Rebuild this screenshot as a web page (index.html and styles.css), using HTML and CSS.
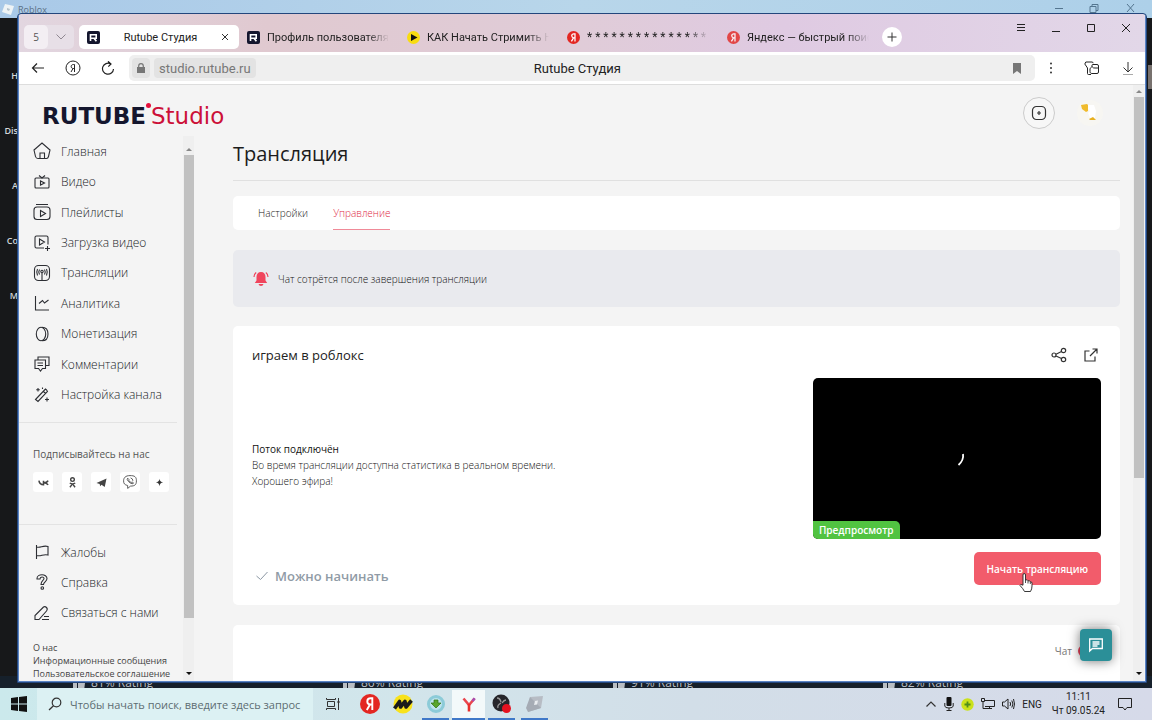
FILE: index.html
```html
<!DOCTYPE html>
<html lang="ru">
<head>
<meta charset="utf-8">
<title>Rutube Студия</title>
<link rel="stylesheet" href="styles.css">
</head>
<body>
<svg class="defs" aria-hidden="true">
  <symbol id="thumb" viewBox="0 0 12 12"><path d="M0 4h4v8H0zM5 4l3-4h2l-1 4h3l-1 8H5z" fill="currentColor"/></symbol>
  <symbol id="rlogo" viewBox="0 0 13 13"><rect width="13" height="13" rx="2" fill="#14162e"/><path d="M3.500 10V3.700h5.700v3.500H4M7 7.200l2.400 3" fill="none" stroke="#fff" stroke-width="1.600"/></symbol>
  <symbol id="ya" viewBox="0 0 20 20"><circle cx="10" cy="10" r="10" fill="currentColor"/><path d="M12.300 16V4.300h-1.600C8.500 4.300 7.300 5.600 7.300 7.400c0 2 1 2.900 3 3.100h2M10 10.500L6.800 16" fill="none" stroke="#fff" stroke-width="1.900"/></symbol>
</svg>

<div class="desktop">
  <section class="roblox">
    <header class="roblox-bar">
      <svg width="12" height="12" viewBox="0 0 12 12"><path d="M3 1l9 2-3 9-9-3z" fill="#eef3f5"/><path d="M5 5l3 1-1 2-2-1z" fill="#b4c2cc"/></svg>
      <span class="roblox-name">Roblox</span>
      <svg width="96" height="12" viewBox="0 0 96 12" fill="none" stroke="#54758f"><path d="M11 5.500h8M46 3.500h6v6h-6zM48 3V1.500h6v6h-2M83 1l7 8M90 1l-7 8"/></svg>
    </header>
    <div class="roblox-body">
      <nav class="roblox-nav"><span>H</span><span>Dis</span><span>A</span><span>Co</span><span>M</span></nav>
      <span class="roblox-scroll"></span>
    </div>
    <div class="ratings">
      <span><svg width="12" height="12"><use href="#thumb"/></svg>81% Rating</span>
      <span><svg width="12" height="12"><use href="#thumb"/></svg>86% Rating</span>
      <span><svg width="12" height="12"><use href="#thumb"/></svg>91% Rating</span>
      <span><svg width="12" height="12"><use href="#thumb"/></svg>82% Rating</span>
    </div>
  </section>

  <section class="browser">
    <header class="tabstrip">
      <div class="tab-group">
        <button class="tab-count">5</button>
        <button class="tab-drop" aria-label="Список вкладок"><svg width="10" height="6" viewBox="0 0 10 6"><path d="M.5.5L5 5 9.500.5" fill="none" stroke="#8f8791"/></svg></button>
      </div>
      <div class="tabs">
        <div class="tab active"><svg width="13" height="13"><use href="#rlogo"/></svg><span class="tab-name">Rutube Студия</span><button class="tab-close" aria-label="Закрыть"><svg width="8" height="8" viewBox="0 0 8 8"><path d="M1 1l6 6M7 1L1 7" stroke="#333"/></svg></button></div>
        <div class="tab"><svg width="13" height="13"><use href="#rlogo"/></svg><span class="tab-name">Профиль пользователя R</span></div>
        <div class="tab"><svg width="13" height="13" viewBox="0 0 13 13"><circle cx="6.500" cy="6.500" r="6.500" fill="#f8dc10"/><path d="M4 3l6.500 3.500L4 10z" fill="#111"/></svg><span class="tab-name">КАК Начать Стримить НА</span></div>
        <div class="tab"><svg class="red" width="13" height="13"><use href="#ya"/></svg><span class="tab-name stars">* * * * * * * * * * * * * * * * * *</span></div>
        <div class="tab"><svg class="red pale" width="13" height="13"><use href="#ya"/></svg><span class="tab-name">Яндекс — быстрый поиск</span></div>
      </div>
      <button class="new-tab" aria-label="Новая вкладка"><svg width="10" height="10" viewBox="0 0 10 10"><path d="M5 .5v9M.5 5h9" stroke="#333"/></svg></button>
      <div class="win-controls">
        <button aria-label="Меню"><svg width="10" height="10" viewBox="0 0 10 10"><path d="M1 1.500h8M1 4.500h8M1 7.500h8" stroke="#222"/></svg></button>
        <button aria-label="Свернуть"><svg width="10" height="10" viewBox="0 0 10 10"><path d="M1 8.500h8" stroke="#222"/></svg></button>
        <button aria-label="Развернуть"><svg width="10" height="10" viewBox="0 0 10 10"><path d="M1.500 1.500h7v7h-7z" fill="none" stroke="#222"/></svg></button>
        <button aria-label="Закрыть окно"><svg width="10" height="10" viewBox="0 0 10 10"><path d="M1 1l8 8M9 1L1 9" stroke="#222"/></svg></button>
      </div>
    </header>

    <div class="toolbar">
      <button class="tool" aria-label="Назад"><svg width="14" height="14" viewBox="0 0 14 14"><path d="M13 7H2M6 2.500L1.500 7 6 11.500" fill="none" stroke="#222" stroke-width="1.200"/></svg></button>
      <button class="tool" aria-label="Яндекс"><svg width="16" height="16" viewBox="0 0 16 16" fill="none" stroke="#222"><circle cx="8" cy="8" r="7"/><path d="M9.500 12V4.500h-1c-1.500 0-2.300.8-2.300 2s.8 2 2 2h1.300M8 8.500L6 12"/></svg></button>
      <button class="tool" aria-label="Обновить"><svg width="14" height="14" viewBox="0 0 14 14"><path d="M12.500 8A5.500 5.500 0 1 1 9.500 2.800M7 .3l3 2.700-2.700 2.700" fill="none" stroke="#222" stroke-width="1.200"/></svg></button>
      <div class="address">
        <button class="lock" aria-label="Соединение"><svg width="8" height="10" viewBox="0 0 8 10"><path d="M0 4h8v6H0z" fill="#777"/><path d="M1.700 4V3a2.300 2.300 0 0 1 4.600 0v1" fill="none" stroke="#777" stroke-width="1.200"/></svg></button>
        <button class="host">studio.rutube.ru</button>
        <span class="page-name">Rutube Студия</span>
        <button class="bookmark" aria-label="Закладка"><svg width="8" height="11" viewBox="0 0 8 11"><path d="M0 0h8v11L4 8l-4 3z" fill="#777"/></svg></button>
      </div>
      <div class="tool-right">
        <button class="tool more" aria-label="Ещё"><svg width="4" height="14" viewBox="0 0 4 14" fill="#333"><circle cx="2" cy="2.500" r="1"/><circle cx="2" cy="7" r="1"/><circle cx="2" cy="11.500" r="1"/></svg></button>
        <button class="tool" aria-label="Расширения"><svg width="15" height="15" viewBox="0 0 15 15" fill="none" stroke="#222"><path d="M7 13.500H4.500q-1 0-1-1V7L.8 3l1-2H8q1 0 1.200 1.200"/><path d="M6.500 12q-.5-.5-.5-1.500V8q0-.8.8-1.300L8 5.500V4.300q0-.8 1-.8h4q1.500 0 1.500 1.500v6q0 1.500-1.500 1.500H8q-1 0-1.500-.5zM8 5.500q1.500 2 3 1.500h3.500"/></svg></button>
        <button class="tool" aria-label="Загрузки"><svg width="12" height="14" viewBox="0 0 12 14"><path d="M6 1v10M1.500 6.500L6 11l4.500-4.500" fill="none" stroke="#333"/><path d="M1 13.500h10" stroke="#aaa"/></svg></button>
      </div>
    </div>

    <div class="page">
      <div class="site">
        <header class="site-head">
          <a class="logo" href="#"><span class="logo-main">RUTUBE</span><i class="logo-dot"></i><span class="logo-sub">Studio</span></a>
          <div class="head-actions">
            <button class="create" aria-label="Создать"><svg width="16" height="16" viewBox="0 0 16 16"><rect x="1.500" y="1.500" width="13" height="13" rx="4" fill="none" stroke="#333" stroke-width="1.200"/><path d="M8 6v4M6 8h4" stroke="#333" stroke-width="1.200"/></svg></button>
            <button class="avatar" aria-label="Профиль"><svg width="28" height="28" viewBox="0 0 28 28"><circle cx="14" cy="14" r="13" fill="#f7f6f2"/><path d="M5 6l6-1 1 1v6l-2 1-4-3z" fill="#f0bb2c"/><path d="M12 6h6l2 6-1 7h-5l-2-5 2-2-2-2z" fill="#fff"/><path d="M13 20l4-2 3 3h-6z" fill="#e8b020"/></svg></button>
          </div>
        </header>
        <div class="site-body">
          <aside class="sidebar">
            <div class="side-content">
              <nav class="menu menu-main">
                <a href="#"><svg viewBox="0 0 18 18"><path d="M5 16.500h8.500q1.500 0 2-2l1.500-6.500L9 1 1 8l1.500 6.500q.5 2 2.500 2zM7 16.500V11h4.500v5.500"/></svg>Главная</a>
                <a href="#"><svg viewBox="0 0 18 18"><rect x="2" y="5" width="14" height="10" rx="1"/><path d="M6 2.500L9 5l3-2.500M7.500 8v4l4-2z"/></svg>Видео</a>
                <a href="#"><svg viewBox="0 0 18 18"><rect x="1" y="4" width="16" height="12.500" rx="3"/><path d="M3 1.500h12M7.500 7.500v6l5-3z"/></svg>Плейлисты</a>
                <a href="#"><svg viewBox="0 0 18 18"><path d="M11 14H3.500Q2 14 2 12.500v-9Q2 2 3.500 2h10Q15 2 15 3.500v7M6.500 5v6l5-3zM14.500 12v5M12 14.500h5"/></svg>Загрузка видео</a>
                <a href="#"><svg viewBox="0 0 18 18"><rect x="1.500" y="1.500" width="15" height="15" rx="4"/><circle cx="9" cy="7.500" r="1.200"/><path d="M9 9v7M6.500 5.500q-1.500 2.500 0 5M4.500 5q-1.500 3 0 6.500M11.500 5.500q1.500 2.500 0 5M13.500 5q1.500 3 0 6.500"/></svg>Трансляции</a>
                <a href="#"><svg viewBox="0 0 18 18"><path d="M2.500 2v14H16M6 9.500l3.500-3 2 2.500L15.500 6"/></svg>Аналитика</a>
                <a href="#"><svg viewBox="0 0 18 18"><ellipse cx="8" cy="9" rx="4.700" ry="6.800"/><path d="M9 2.200c4 0 6 3 6 6.800s-2 6.800-6 6.800"/></svg>Монетизация</a>
                <a href="#"><svg viewBox="0 0 18 18"><path d="M2 5h10.500v8.500H9.500l-2 2.500-2-2.500H2zM5 5V2h11v8.500h-3.500M4.500 8h5.500M4.500 10.500h5.500"/></svg>Комментарии</a>
                <a href="#"><svg viewBox="0 0 18 18"><path d="M2.500 13.500L12.500 3q1 .5 2 2.500L5 15.500zM10.500 5.500l2 2M5 2v3.500M3.200 3.700h3.600M14 11.500v4M12 13.500h4M9.500 1.500V3"/></svg>Настройка канала</a>
              </nav>
              <section class="follow">
                <h2>Подписывайтесь на нас</h2>
                <div class="socials">
                  <a href="#" aria-label="VK"><svg viewBox="0 0 12 12"><path d="M1 4c.5 3 2 4.500 5 4.500V4M11 4C10 6 8.500 6.300 6.300 6.300 9 6.300 10 7 11 8.700" fill="none" stroke="#444" stroke-width="1.700"/></svg></a>
                  <a href="#" aria-label="Одноклассники"><svg viewBox="0 0 12 12" fill="none" stroke="#444" stroke-width="1.500"><circle cx="6" cy="2.800" r="2"/><path d="M3 6.500q3 2 6 0M6 7.500L3.200 11.200M6 7.500l2.800 3.700"/></svg></a>
                  <a href="#" aria-label="Telegram"><svg viewBox="0 0 12 12"><path d="M.5 6.500l11-5-2 9.500L6 8.500 4.500 10 4 7.500z" fill="#444"/></svg></a>
                  <a href="#" aria-label="Viber"><svg class="big" viewBox="0 0 12 12" fill="none" stroke="#555" stroke-width=".8"><path d="M6 .5c4 0 5.500 1 5.500 4.500S10 9.500 6.500 9.500L4 11.500V9C1.500 8.500.5 7.500.5 5S2 .5 6 .5z"/><path d="M4 2.700q-1.200 1 .8 3T8.500 7.500L9 6.700 7.800 6 7 6.400Q5.500 6 5 4.600l.2-.6zM6.500 2.500Q8.500 3 8.500 5"/></svg></a>
                  <a href="#" aria-label="Дзен"><svg viewBox="0 0 12 12"><path d="M6 2q.3 3.700 4 4-3.700.3-4 4-.3-3.700-4-4 3.700-.3 4-4z" fill="#333"/></svg></a>
                </div>
              </section>
              <nav class="menu menu-help">
                <a href="#"><svg viewBox="0 0 18 18"><path d="M3.500 2v14M3.500 4c4 1.500 6-2 11.500-.5V12c-5-1.500-7 2-11.500.5"/></svg>Жалобы</a>
                <a href="#"><svg viewBox="0 0 18 18"><path d="M4 5.500C4 .5 14 .5 14 5.500c0 3-3.500 3.500-3.500 6h-2.500c0-4 3-4 3-6 0-2-4-2-4 .5H4z"/><circle cx="9.300" cy="15" r="1.300"/></svg>Справка</a>
                <a href="#"><svg viewBox="0 0 18 18"><path d="M2 15.500v-4L10.500 3q1.500-1 3 .5t0 3.500L6 15.500zM11 12.500h5M9 15.500h7"/></svg>Связаться с нами</a>
              </nav>
              <div class="legal">
                <a href="#">О нас</a>
                <a href="#">Информационные сообщения</a>
                <a href="#">Пользовательское соглашение</a>
              </div>
            </div>
            <div class="scrollbar side-scroll"><i class="up"></i><i class="thumb"></i><i class="down"></i></div>
          </aside>

          <main class="main">
            <h1>Трансляция</h1>
            <div class="card subtabs">
              <a href="#">Настройки</a>
              <a href="#" class="current">Управление</a>
            </div>
            <div class="notice">
              <svg width="16" height="16" viewBox="0 0 16 16"><path d="M8 1c3 0 4.500 2 4.500 5v3.500l1.700 2.500H1.800l1.700-2.500V6C3.500 3 5 1 8 1zM5.500 13h5q-.5 2-2.500 2t-2.500-2z" fill="#f0455c"/><path d="M1 6q0-3 2.200-4.500M15 6q0-3-2.200-4.500" fill="none" stroke="#f0455c" stroke-width="1.200"/></svg>
              <span>Чат сотрётся после завершения трансляции</span>
            </div>
            <section class="card stream">
              <div class="stream-head">
                <h2>играем в роблокс</h2>
                <div class="stream-actions">
                  <button aria-label="Поделиться"><svg width="16" height="16" viewBox="0 0 16 16" fill="none" stroke="#333" stroke-width="1.200"><circle cx="3" cy="8" r="2"/><circle cx="12.500" cy="3.500" r="2.200"/><circle cx="12.500" cy="12.500" r="2.200"/><path d="M5 7.200l5.500-2.700M5 9l5.500 2.500"/></svg></button>
                  <button aria-label="Открыть"><svg width="16" height="16" viewBox="0 0 16 16" fill="none" stroke="#333" stroke-width="1.200"><path d="M6.500 4H2v10h10V9.500M7 9l7-7M9.500 2H14v4.500"/></svg></button>
                </div>
              </div>
              <div class="stream-body">
                <div class="info"><strong>Поток подключён</strong><p>Во время трансляции доступна статистика в реальном времени.<br>Хорошего эфира!</p></div>
                <div class="preview">
                  <svg class="spinner" width="24" height="24" viewBox="0 0 24 24"><path d="M18 7q1 6-4.500 11" fill="none" stroke="#fff" stroke-width="1.800"/></svg>
                  <span class="preview-tag">Предпросмотр</span>
                </div>
              </div>
              <div class="stream-foot">
                <span class="ready"><svg width="12" height="10" viewBox="0 0 12 10"><path d="M.5 5l4 3.500L11.500 1" fill="none" stroke="#8b97a3"/></svg>Можно начинать</span>
                <button class="start">Начать трансляцию<svg class="cursor" width="14" height="19" viewBox="0 0 14 19"><path d="M4 11V2q0-1.500 1.200-1.500T6.500 2v5q2-.7 2.500.8 2-.5 2.300 1 1.700-.3 1.700 1.400V13q0 3-1.500 5.500h-6Q4 15.500 1 12.500q0-2 3-.3z" fill="#fff" stroke="#222" stroke-width=".9"/><path d="M6.500 7v3M9 8v2.500M11.300 9v2" stroke="#222" stroke-width=".8"/></svg></button>
              </div>
            </section>
            <section class="card chat"><label for="chat-on">Чат</label><input id="chat-on" type="checkbox" checked></section>
          </main>
        </div>
      </div>
      <div class="scrollbar page-scroll"><i class="up"></i><i class="thumb"></i><i class="down"></i></div>
      <button class="widget" aria-label="Чат поддержки"><svg width="16" height="16" viewBox="0 0 16 16"><path d="M1.700 14V2h12.600v9.500H4.500zM4.500 5h7M4.500 7h7M4.500 9h5" fill="none" stroke="#fff" stroke-width="1.300"/></svg></button>
    </div>
  </section>
</div>

<footer class="taskbar">
  <button class="start-menu" aria-label="Пуск"><svg width="16" height="16" viewBox="0 0 16 16"><path d="M0 2l7-1v6.500H0zM8 1l8-1v7.500H8zM0 8.500h7V15l-7-1zM8 8.500h8V16l-8-1z" fill="#111"/></svg></button>
  <label class="search"><svg width="14" height="14" viewBox="0 0 14 14"><circle cx="8.500" cy="5.500" r="4.300" fill="none" stroke="#333" stroke-width="1.200"/><path d="M5.500 8.700L1 13" stroke="#333" stroke-width="1.300"/></svg><input type="text" aria-label="Поиск" placeholder="Чтобы начать поиск, введите здесь запрос"></label>
  <div class="apps">
    <button class="views" aria-label="Представление задач"><svg width="16" height="14" viewBox="0 0 16 14" fill="none" stroke="#333"><path d="M2.500 4.500h7v5h-7zM1.500 1v1.500h9V1M1.500 13v-1.500h9V13M13.500 1v12"/><path d="M12.500 4h2v2h-2z" fill="#333" stroke="none"/></svg></button>
    <button class="red" aria-label="Яндекс"><svg width="20" height="20"><use href="#ya"/></svg></button>
    <button aria-label="Музыка"><svg width="20" height="20" viewBox="0 0 20 20"><circle cx="10" cy="10" r="9.500" fill="#f8e21c"/><path d="M1.500 14.500l5-7 1 5.500 4.500-5.500 1 5.500 5.500-6.500" fill="none" stroke="#1a1a1a" stroke-width="3.600" stroke-linejoin="round"/></svg></button>
    <button class="open" aria-label="Загрузчик"><svg width="20" height="20" viewBox="0 0 20 20"><circle cx="10" cy="10" r="7.500" fill="#bfe3ec" stroke="#8ccbd8" stroke-width="3"/><path d="M8 6h4v3h3l-5 5-5-5h3z" fill="#5aa52c" stroke="#2f7314" stroke-width=".7"/></svg></button>
    <button class="open focused" aria-label="Яндекс Браузер"><svg width="20" height="20" viewBox="0 0 20 20"><path d="M4.500 4.500L10 11l5.500-6.500" fill="none" stroke="#e9464e" stroke-width="2.600"/><path d="M10 10v7.500" stroke="#e8302c" stroke-width="2.600"/><path d="M13.500 7l2.200-2.700" stroke="#a84db0" stroke-width="2.600"/></svg></button>
    <button class="open" aria-label="OBS"><svg width="20" height="20" viewBox="0 0 20 20"><circle cx="9" cy="9" r="8.500" fill="#26262b"/><path d="M5 4q3 0 4 4M14 6q-2 0-4 3M6 14q-1-3 3-5" fill="none" stroke="#999" stroke-width="1.300"/><circle cx="14.500" cy="14.500" r="4.500" fill="#e51220"/></svg></button>
    <button class="open" aria-label="Roblox"><svg width="20" height="20" viewBox="0 0 20 20"><path d="M5 3l13-1-2 12-13 4z" fill="#b7bcc4"/><path d="M5 3L1 14l2 4 13-4z" fill="#a5abb4"/><path d="M10 7l3-.5-1 4-3 .5z" fill="#e9ecef"/></svg></button>
  </div>
  <div class="tray">
    <svg width="12" height="8" viewBox="0 0 12 8"><path d="M1.500 6.500L6 2l4.500 4.500" fill="none" stroke="#333" stroke-width="1.200"/></svg>
    <svg width="10" height="14" viewBox="0 0 10 14"><rect x="2.500" y="0" width="5" height="9" rx="1" fill="#111"/><path d="M.8 6v3q0 2 4.200 2t4.200-2V6M5 11v2.500M2.500 13.500h5" fill="none" stroke="#222"/></svg>
    <svg width="13" height="13" viewBox="0 0 13 13"><circle cx="6.500" cy="6.500" r="6.200" fill="#cbe11c"/><path d="M6.500 3.500v6M3.500 6.500h6" stroke="#4f8d19" stroke-width="1.800"/></svg>
    <svg width="14" height="12" viewBox="0 0 14 12" fill="none" stroke="#222"><path d="M4 2.500h9.500v6H4M.5.5h3v3h-3zM2 3.500v7h9M8.500 8.500v2"/></svg>
    <svg width="13" height="12" viewBox="0 0 13 12" fill="none" stroke="#222"><path d="M.5 4v4h2L6 11V1L2.500 4zM8 4q1.300 2 0 4M9.800 2.500q2.300 3.500 0 7M11.500 1q2 5 0 10"/></svg>
    <span class="lang">ENG</span>
    <time class="clock">11:11<br>Чт 09.05.24</time>
    <svg class="notes" width="14" height="14" viewBox="0 0 14 14"><path d="M.5 1.500h13v9H9L7 13l-2-2.500H.5z" fill="none" stroke="#222"/></svg>
  </div>
</footer>
</body>
</html>
```
FILE: styles.css
```css
* { box-sizing: border-box; }
body {
  margin: 0;
  height: 100vh;
  display: flex;
  flex-direction: column;
  overflow: hidden;
  font-family: "Open Sans", "Noto Sans", sans-serif;
  font-size: 12px;
  color: #222;
}
h1, h2, p { margin: 0; }
a { color: inherit; text-decoration: none; }
button { border: 0; padding: 0; background: none; font: inherit; color: inherit; display: flex; align-items: center; justify-content: center; }
svg { display: block; flex: none; }
.defs { position: absolute; width: 0; height: 0; }
.red { color: #e32722; }
.pale { opacity: .8; }

/* desktop and background window */
.desktop { flex: 1; min-height: 0; position: relative; background: #17181a; }
.roblox { height: 100%; display: flex; flex-direction: column; overflow: hidden; }
.roblox-bar { height: 18px; flex: none; display: flex; align-items: center; gap: 4px; padding: 0 12px 0 2px; background: linear-gradient(90deg, #a9c9e8, #b8d6ea 50%, #add0e9); }
.roblox-name { flex: 1; font-size: 9px; color: #5b7085; }
.roblox-body { flex: 1; display: flex; justify-content: space-between; }
.roblox-nav { width: 18px; padding-top: 30px; font-size: 9px; font-weight: 600; line-height: 55px; color: #d5d8da; display: flex; flex-direction: column; align-items: flex-end; }
.roblox-scroll { width: 4px; height: 24px; margin-top: 47px; background: #77716e; }
.ratings { height: 12px; flex: none; display: grid; grid-template-columns: repeat(4, 270px); padding: 3px 0 0 73px; background: #16202b; color: #b9bec3; line-height: 8px; }
.ratings span { display: flex; gap: 6px; height: 9px; }

/* browser window */
.browser { position: absolute; inset: 14px 6px 6px 18px; display: flex; flex-direction: column; background: #fff; border: 1px solid #5b84c4; border-top: 0; outline: 1px solid #23467c; border-radius: 3px 3px 0 0; overflow: hidden; }
.tabstrip { height: 38px; flex: none; display: flex; align-items: center; padding: 8px 2px 0 5px; background: linear-gradient(90deg, #e2d6e0, #e0c9d0 22%, #e0ccd8 50%, #dfcae2 68%, #e2d7e8); }
.tab-group { display: flex; width: 50px; height: 24px; margin-right: 5px; border-radius: 5px; background: #e7dfe7; }
.tab-count { width: 24px; border-radius: 5px; background: #f3eef3; font-size: 10px; color: #555; }
.tab-drop { flex: 1; }
.tabs { display: grid; grid-template-columns: repeat(5, 160px); }
.tab { height: 24px; display: flex; align-items: center; gap: 7px; padding: 0 10px 0 8px; border-radius: 5px; font-family: Roboto, sans-serif; font-size: 11px; }
.tab-name { flex: 1; overflow: hidden; white-space: nowrap; mask-image: linear-gradient(90deg, #000 82%, transparent); }
.active { background: #fff; }
.active .tab-name { text-align: center; mask-image: none; }
.stars { font-size: 12px; }
.new-tab { width: 20px; height: 20px; margin-left: 3px; border-radius: 50%; background: #fff; }
.win-controls { display: flex; margin-left: auto; align-self: flex-start; }
.win-controls button { width: 35px; height: 12px; }

.toolbar { height: 33px; flex: none; display: flex; align-items: center; padding-left: 1px; border-bottom: 1px solid #ddd; background: #fff; }
.tool { width: 35px; height: 28px; }
.address { flex: 1; display: flex; align-items: center; height: 26px; margin-left: 4px; padding: 0 14px 0 3px; border-radius: 5px; background: #efefef; font-family: Roboto, sans-serif; font-size: 13px; }
.lock { width: 18px; height: 20px; border-radius: 4px; background: #e3e3e3; }
.host { height: 20px; margin-left: 4px; padding: 0 5px; border-radius: 4px; background: #e3e3e3; color: #777; }
.page-name { flex: 1; padding-right: 114px; text-align: center; }
.tool-right { display: flex; gap: 1px; }
.more { width: 38px; padding-right: 6px; }

/* page */
.page { flex: 1; min-height: 0; display: flex; position: relative; background: #f4f4f4; }
.site { flex: 1; min-width: 0; display: flex; flex-direction: column; }
.site-head { flex: none; height: 51px; display: flex; align-items: center; justify-content: space-between; padding: 5px 27px 0 23px; }
.logo { display: flex; align-items: center; padding-top: 6px; font-family: "DejaVu Sans", sans-serif; font-size: 23px; line-height: 26px; }
.logo-main { font-weight: 700; color: #14162e; }
.logo-dot { width: 5px; height: 5px; align-self: flex-start; border-radius: 50%; background: #e5103c; }
.logo-sub { color: #cc1038; }
.head-actions { display: flex; gap: 19px; }
.create, .avatar { width: 32px; height: 32px; border-radius: 50%; }
.create { border: 1px solid #ccc; background: #f7f7f7; }
.site-body { flex: 1; min-height: 0; display: flex; }

.sidebar { width: 175px; flex: none; display: flex; overflow: hidden; }
.side-content { flex: 1; min-width: 0; margin-right: 6px; }
.menu { display: grid; font-weight: 300; color: #222428; }
.menu a { display: flex; align-items: center; gap: 10px; padding-left: 14px; }
.menu svg { width: 18px; height: 18px; fill: none; stroke: #2c2e33; stroke-width: 1.1; }
.menu-main { min-height: 274px; }
.menu-help { min-height: 91px; margin-top: 12px; }
.follow { margin-top: 12px; padding: 23px 0 32px 14px; border: solid #e3e3e3; border-width: 1px 0; }
.follow h2 { font-size: 10px; line-height: 16px; font-weight: 500; color: #555; }
.socials { display: flex; gap: 9px; margin-top: 10px; }
.socials a { width: 20px; height: 20px; display: grid; place-items: center; background: #fff; border-radius: 3px; }
.socials svg { width: 11px; height: 11px; }
.socials .big { width: 14px; height: 14px; }
.legal { margin-top: 13px; padding-left: 14px; display: flex; flex-direction: column; font-size: 9px; line-height: 13px; font-weight: 500; color: #444; white-space: nowrap; }

.scrollbar { flex: none; width: 11px; display: flex; flex-direction: column; align-items: center; background: #efefef; }
.scrollbar .up, .scrollbar .down { border: solid transparent; border-width: 0 3px; }
.scrollbar .up { margin: 5px 0 4px; border-bottom: 3px solid #888; }
.scrollbar .down { margin: auto 0 6px; border-top: 3px solid #111; }
.scrollbar .thumb { width: 10px; background: #c1c1c1; }
.side-scroll { padding-top: 7px; }
.side-scroll .thumb { height: 86%; }
.page-scroll { margin-right: 1px; }
.page-scroll .thumb { height: 64%; }

.main { flex: 1; min-width: 0; overflow: hidden; padding: 0 13px 0 39px; display: flex; flex-direction: column; }
.main > * { flex: none; }
h1 { height: 45px; border-bottom: 1px solid #e0e0e0; font-size: 20px; line-height: 36px; font-weight: 500; color: #1c1c1c; }
.card { background: #fff; border-radius: 5px; }
.subtabs { margin-top: 15px; height: 34px; padding: 0 25px; display: flex; gap: 25px; font-size: 10px; font-weight: 300; line-height: 34px; color: #222; }
.subtabs .current { color: #e02844; border-bottom: 1px solid #f08a98; }
.notice { display: flex; align-items: center; gap: 9px; margin-top: 20px; height: 57px; padding: 0 20px; border-radius: 5px; background: #e9eaee; font-size: 10px; font-weight: 300; color: #111; }
.stream { margin-top: 19px; padding: 17px 19px 20px; }
.stream-head { display: flex; align-items: center; justify-content: space-between; margin-bottom: 11px; }
.stream h2 { font-size: 13px; line-height: 24px; font-weight: 500; }
.stream-actions { display: flex; gap: 16px; padding-right: 2px; }
.stream-body { display: flex; justify-content: space-between; align-items: center; }
.info { padding-top: 12px; font-size: 10px; font-weight: 300; line-height: 16px; color: #111; }
.info strong { font-weight: 500; color: #111; }
.preview { position: relative; width: 288px; height: 161px; display: grid; place-items: center; border-radius: 5px; background: #000; overflow: hidden; }
.preview-tag { position: absolute; left: 0; bottom: 0; padding: 0 6px; line-height: 18px; font-size: 10px; font-weight: 600; color: #fff; background: #51c341; border-radius: 0 5px 0 0; }
.stream-foot { display: flex; justify-content: space-between; align-items: flex-start; margin-top: 13px; }
.ready { display: flex; align-items: center; gap: 7px; padding: 15px 0 0 4px; font-size: 13px; line-height: 18px; font-weight: 600; color: #909ba6; }
.start { position: relative; height: 33px; padding: 0 13px; border-radius: 5px; background: #f25c6b; color: #fff; font-size: 10px; font-weight: 600; }
.cursor { position: absolute; left: 45px; top: 21px; }
.chat { margin-top: 20px; height: 80px; padding: 18px 19px; display: flex; justify-content: flex-end; gap: 6px; font-size: 10px; line-height: 16px; color: #777; }
.chat input { appearance: none; width: 23px; height: 12px; margin: 2px 0 0; border-radius: 6px; background: #e8415a; }
.widget { position: absolute; right: 33px; bottom: 20px; width: 32px; height: 32px; border-radius: 4px; background: #2b8f98; box-shadow: 0 0 12px rgba(0, 0, 0, .55); }

/* taskbar */
.taskbar { height: 32px; flex: none; display: flex; background: linear-gradient(90deg, #cbe9ec, #d2e5eb 35%, #d2dee8 60%, #d6dae9); }
.start-menu { width: 37px; }
.search { width: 276px; display: flex; align-items: center; gap: 8px; padding-left: 11px; background: #dcf1f3; }
.search input { flex: 1; min-width: 0; border: 0; padding: 0; background: none; font: inherit; font-size: 11px; outline: 0; }
.search input::placeholder { color: #5c6d72; opacity: 1; }
.apps { display: flex; margin-left: 3px; }
.apps button { width: 27px; margin: 0 3px; border: solid transparent; border-width: 2px 0; background-clip: padding-box; }
.apps .views { margin-right: 7px; }
.apps .open { border-bottom-color: #3f78c8; }
.apps .focused { width: 33px; margin: 0; background-color: #f3f9fa; }
.tray { margin-left: auto; display: flex; align-items: center; gap: 7px; padding-right: 20px; }
.lang { font-size: 10px; font-family: Roboto, sans-serif; }
.clock { margin-left: 3px; font-family: Roboto, sans-serif; font-size: 10px; line-height: 14px; text-align: center; }
.notes { margin-left: 6px; }
```
